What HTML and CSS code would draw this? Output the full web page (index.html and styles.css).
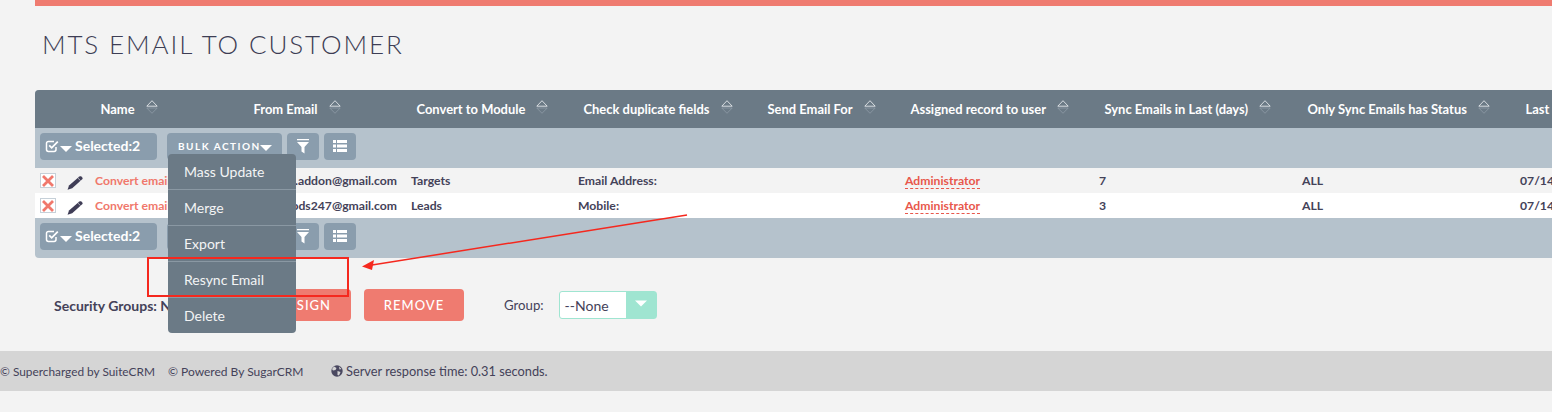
FILE: index.html
```html
<!DOCTYPE html>
<html lang="en">
<head>
<meta charset="utf-8">
<title>MTS Email to Customer</title>
<link rel="stylesheet" href="styles.css">
</head>
<body>
<svg class="defs" width="0" height="0" aria-hidden="true">
  <symbol id="sort" viewBox="0 0 12 14">
    <path d="M6 .7 11.2 6.200H.8Z" fill="none" stroke="#e3e7ea" stroke-width=".9"/>
    <path d="M.8 8H11.200L6 13.300Z" fill="none" stroke="#8f9ca7" stroke-width=".8"/>
  </symbol>
  <symbol id="check" viewBox="0 0 14 14">
    <path d="M11 8v2.600A1.900 1.900 0 0 1 9.100 12.500H3.400A1.900 1.900 0 0 1 1.500 10.600V4.400A1.900 1.900 0 0 1 3.400 2.500H9" fill="none" stroke="#fff" stroke-width="1.500"/>
    <path d="M4.200 6.300 6.700 8.800 12.800 2.700" fill="none" stroke="#fff" stroke-width="1.800"/>
  </symbol>
  <symbol id="caret" viewBox="0 0 12 6"><path d="M0 0H12L6 6Z" fill="#fff"/></symbol>
  <symbol id="filter" viewBox="0 0 14 15">
    <path d="M1 0H13V1.200H1ZM1 3H13L8.500 8V14.500L5.500 12.500V8Z" fill="#fff"/>
  </symbol>
  <symbol id="list" viewBox="0 0 14 12">
    <path d="M0 0H3V3H0ZM4 0H14V3H4ZM0 4.500H3V7.500H0ZM4 4.500H14V7.500H4ZM0 9H3V12H0ZM4 9H14V12H4Z" fill="#fff"/>
  </symbol>
  <symbol id="cross" viewBox="0 0 12 12"><path d="M1 1 11 11M11 1 1 11" stroke="#f0786c" stroke-width="2.800" fill="none"/></symbol>
  <symbol id="pencil" viewBox="0 0 16 14"><path d="M12.400.5C13 0 13.700 0 14.300.5L15.300 1.500C15.800 2.100 15.700 2.800 15.200 3.300L5.200 12.200.6 13.800 2 9.600Z" fill="#3f3d56"/><path d="M10.800 2 13.600 4.700" stroke="#f3f3f3" stroke-width=".6"/></symbol>
</svg>

<div class="top-bar"></div>
<h1 class="title">MTS Email to Customer</h1>

<div class="panel">
  <div class="row head">
    <div></div>
    <div class="th">Name <svg class="sort"><use href="#sort"/></svg></div>
    <div class="th">From Email <svg class="sort"><use href="#sort"/></svg></div>
    <div class="th">Convert to Module <svg class="sort"><use href="#sort"/></svg></div>
    <div class="th">Check duplicate fields <svg class="sort"><use href="#sort"/></svg></div>
    <div class="th">Send Email For <svg class="sort"><use href="#sort"/></svg></div>
    <div class="th">Assigned record to user <svg class="sort"><use href="#sort"/></svg></div>
    <div class="th">Sync Emails in Last (days) <svg class="sort"><use href="#sort"/></svg></div>
    <div class="th">Only Sync Emails has Status <svg class="sort"><use href="#sort"/></svg></div>
    <div class="th">Last Sync Date</div>
  </div>

  <div class="toolbar">
    <div class="btn selected"><svg class="ic-check"><use href="#check"/></svg><svg class="ic-caret"><use href="#caret"/></svg><span>Selected:2</span></div>
    <div class="bulk-wrap">
      <div class="btn bulk">BULK ACTION<svg class="ic-caret"><use href="#caret"/></svg></div>
      <ul class="menu">
        <li>Mass Update</li>
        <li>Merge</li>
        <li>Export</li>
        <li>Resync Email</li>
        <li>Delete</li>
      </ul>
    </div>
    <div class="btn square"><svg class="ic-filter"><use href="#filter"/></svg></div>
    <div class="btn square"><svg class="ic-list"><use href="#list"/></svg></div>
  </div>

  <div class="row data odd">
    <div class="actions"><span class="box"><svg class="ic-cross"><use href="#cross"/></svg></span><svg class="ic-pencil"><use href="#pencil"/></svg></div>
    <div class="link">Convert email to customer</div>
    <div class="email">email.addon@gmail.com</div>
    <div>Targets</div>
    <div>Email Address:</div>
    <div></div>
    <div><span class="user">Administrator</span></div>
    <div>7</div>
    <div>ALL</div>
    <div>07/14/2020 10:00</div>
  </div>
  <div class="row data even">
    <div class="actions"><span class="box"><svg class="ic-cross"><use href="#cross"/></svg></span><svg class="ic-pencil"><use href="#pencil"/></svg></div>
    <div class="link">Convert email to customer</div>
    <div class="email">foods247@gmail.com</div>
    <div>Leads</div>
    <div>Mobile:</div>
    <div></div>
    <div><span class="user">Administrator</span></div>
    <div>3</div>
    <div>ALL</div>
    <div>07/14/2020 10:00</div>
  </div>

  <div class="toolbar">
    <div class="btn selected"><svg class="ic-check"><use href="#check"/></svg><svg class="ic-caret"><use href="#caret"/></svg><span>Selected:2</span></div>
    <div class="bulk-wrap">
      <div class="btn bulk">BULK ACTION<svg class="ic-caret"><use href="#caret"/></svg></div>
    </div>
    <div class="btn square"><svg class="ic-filter"><use href="#filter"/></svg></div>
    <div class="btn square"><svg class="ic-list"><use href="#list"/></svg></div>
  </div>
</div>

<div class="groups">
  <strong class="groups-label">Security Groups: None</strong>
  <button class="action assign">ASSIGN</button>
  <button class="action remove">REMOVE</button>
  <span class="group-label">Group:</span>
  <div class="select"><span class="select-value">--None</span><span class="select-arrow"><svg class="ic-select"><use href="#caret"/></svg></span></div>
</div>

<footer class="footer">
  <span class="f1">© Supercharged by SuiteCRM</span>
  <span class="f2">© Powered By SugarCRM</span>
  <svg class="globe" viewBox="0 0 12 12"><circle cx="6" cy="6" r="5.700" fill="#4a4860"/><path d="M3 1.500 5.500 3 4.500 5 2 5.500 1 4ZM6.500 6 9.500 7 8 10.500 6.500 10ZM8 1.500 10.500 4 8.500 4.500Z" fill="#d5d5d5"/></svg>
  <span class="f3">Server response time: 0.31 seconds.</span>
</footer>

<div class="callout-box"></div>
<svg class="callout-arrow" viewBox="0 0 340 60"><path d="M327 2 12 52" stroke="#f5281e" stroke-width="1.500" fill="none"/><path d="M2 53.500 14 47 12 57Z" fill="#f5281e"/></svg>
</body>
</html>
```
FILE: styles.css
```css
* { box-sizing: border-box; }
html, body { margin: 0; height: 412px; overflow: hidden; }
body {
  position: relative;
  background: #f3f3f3;
  font-family: Lato, "Open Sans", sans-serif;
  color: #444259;
}
.defs { position: absolute; }
.top-bar { height: 6px; margin-left: 35px; background: #ef7b70; }
.title {
  margin: 22px 0 0 42px;
  height: 62px;
  font-size: 26px;
  line-height: 32px;
  font-weight: 300;
  letter-spacing: 1.900px;
  text-transform: uppercase;
  color: #3d3d54;
}
.panel {
  width: 1600px;
  margin-left: 35px;
  border-radius: 4px 0 0 4px;
  background: #b5c2cc;
}
.row {
  display: grid;
  grid-template-columns: 60px 153px 163px 167px 184px 143px 194px 203px 218px 115px;
  align-items: center;
}
.head {
  height: 38px;
  background: #6b7a86;
  border-radius: 4px 0 0 0;
  color: #fff;
  font-size: 12.950px;
  font-weight: 700;
}
.th { padding-left: 5.500px; white-space: nowrap; display: flex; align-items: center; gap: 11px; }
.sort { width: 12px; height: 14px; margin-top: -4px; }
.toolbar { height: 40px; display: flex; align-items: flex-start; padding: 5px 0 0 5px; gap: 5px; }
.btn {
  height: 27px;
  border-radius: 4px;
  background: #8a9dad;
  color: #fff;
  display: flex;
  align-items: center;
}
.selected { width: 117px; margin-right: 5px; padding: 0 0 2px 5px; font-size: 14px; font-weight: 700; }
.selected span { margin-left: 3px; }
.ic-check { width: 14px; height: 14px; }
.ic-caret { width: 12px; height: 6px; margin: 6px 0 0 1px; }
.bulk-wrap { position: relative; }
.bulk {
  width: 115px;
  padding: 0 0 1px 11px;
  font-size: 10px;
  font-weight: 700;
  letter-spacing: 1.500px;
}
.bulk .ic-caret { margin: 4px 0 0 -1px; }
.square { width: 32px; justify-content: center; padding-bottom: 1px; }
.ic-filter { width: 14px; height: 15px; }
.ic-list { width: 14px; height: 12px; }
.menu {
  position: absolute;
  z-index: 3;
  left: 1px;
  top: 21px;
  width: 128px;
  margin: 0;
  padding: 0;
  list-style: none;
  background: #6b7a86;
  border-radius: 4px;
  color: #f3f4f5;
  font-size: 14px;
}
.menu li {
  height: 36px;
  line-height: 36px;
  padding-left: 16px;
  border-bottom: 1px solid #8a98a3;
}
.menu li:last-child { border-bottom: 0; height: 35px; }
.data { height: 25px; font-size: 12.200px; font-weight: 700; white-space: nowrap; }
.odd { background: #f3f3f3; }
.even { background: #fff; }
.actions { display: flex; align-items: center; padding-left: 5px; }
.box {
  width: 16px;
  height: 15px;
  background: #fff;
  border: 1px solid #c6d0d8;
  display: flex;
  align-items: center;
  justify-content: center;
}
.ic-cross { width: 12px; height: 12px; }
.ic-pencil { width: 16px; height: 14px; margin: 4px 0 0 11px; }
.link { color: #f0786c; }
.email { text-align: right; padding-right: 14px; }
.user { color: #e8574c; border-bottom: 1px dashed #e8574c; }
.groups { display: flex; align-items: center; height: 34px; margin-top: 30px; padding-left: 54px; }
.groups-label { font-size: 14px; width: 205px; white-space: nowrap; }
.action {
  height: 32px;
  border: 0;
  border-radius: 4px;
  background: #ef7b70;
  color: #fff;
  font-family: inherit;
  font-size: 13px;
  font-weight: 500;
  letter-spacing: 1px;
}
.assign { width: 92px; }
.remove { width: 100px; margin-left: 13px; }
.group-label { margin-left: 40px; font-size: 13.200px; }
.select {
  width: 98px;
  height: 28px;
  margin-left: 15px;
  display: flex;
  background: #fff;
  border: 1px solid #9fe5d1;
  border-radius: 3px;
  font-size: 14px;
}
.select-value { flex: 1; line-height: 27px; padding-left: 5px; }
.select-arrow { width: 30px; background: #9fe5d1; display: flex; align-items: center; justify-content: center; }
.ic-select { width: 12px; height: 7px; margin-bottom: 4px; }
.footer {
  height: 40px;
  margin-top: 29px;
  background: #d5d5d5;
  display: flex;
  align-items: center;
  font-size: 12px;
  white-space: nowrap;
}
.f1 { width: 168px; font-size: 11.850px; }
.f2 { width: 163px; }
.f3 { font-size: 12.800px; }
.globe { width: 12px; height: 12px; margin-right: 3px; }
.callout-box {
  position: absolute;
  z-index: 4;
  left: 147px;
  top: 257px;
  width: 202px;
  height: 40px;
  border: 2px solid #f5281e;
}
.callout-arrow {
  position: absolute;
  z-index: 4;
  left: 360px;
  top: 213px;
  width: 340px;
  height: 60px;
}
```
